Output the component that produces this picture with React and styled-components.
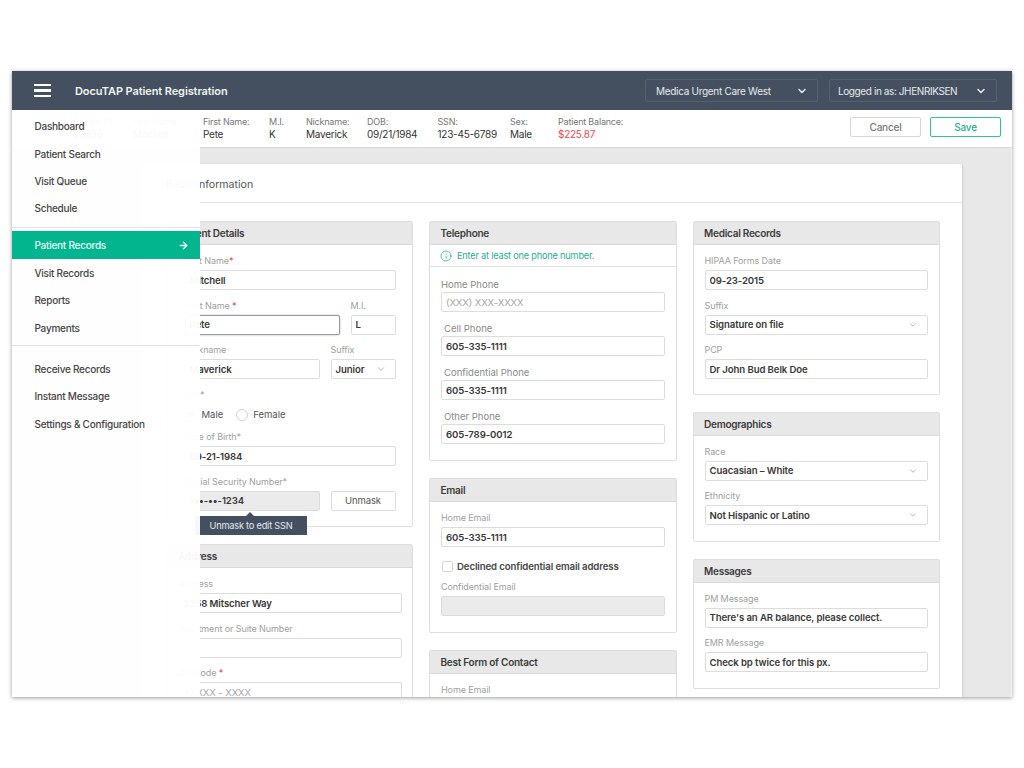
import React from "react";
import styled, { createGlobalStyle } from "styled-components";
import { ArrowRight, ChevronDown, Info } from "lucide-react";

const GlobalStyle = createGlobalStyle`
  html, body {
    margin: 0;
    padding: 0;
    background: #fff;
  }
  body {
    font-family: Inter, "Liberation Sans", sans-serif;
    color: #333;
  }
  * {
    box-sizing: border-box;
  }
`;

const Page = styled.div`
  padding: 71px 12px;
  height: 768px;
`;

const AppWindow = styled.div`
  position: relative;
  display: flex;
  flex-direction: column;
  width: 1000px;
  height: 626px;
  overflow: hidden;
  background: #e8e8e8;
  box-shadow: 0 1px 4px rgba(0, 0, 0, 0.4);
`;

const Header = styled.header`
  display: flex;
  align-items: center;
  flex: none;
  height: 39px;
  padding: 0 15px 0 22px;
  background: #44505f;
`;

const Burger = styled.div`
  display: flex;
  flex-direction: column;
  gap: 3px;
  width: 17px;
  margin-right: 24px;
  & span {
    height: 2.5px;
    background: #fff;
  }
`;

const AppTitle = styled.div`
  flex: 1;
  font-size: 11px;
  font-weight: 600;
  letter-spacing: -0.1px;
  color: #f0f2f4;
`;

const HeaderSelect = styled.div`
  display: flex;
  align-items: center;
  justify-content: space-between;
  width: ${(p) => p.$width}px;
  height: 23px;
  margin-left: 11px;
  padding: 0 9px 0 ${(p) => p.$pad}px;
  border: 1px solid #556170;
  border-radius: 2px;
  font-size: 10px;
  letter-spacing: ${(p) => p.$tight}px;
  white-space: nowrap;
  color: #e6e9ec;
`;

const InfoBar = styled.div`
  display: flex;
  flex: none;
  height: 38px;
  padding: 0 11px 0 61px;
  background: #fff;
  border-bottom: 1px solid #d9d9d9;
`;

const InfoItem = styled.div`
  width: ${(p) => p.$width}px;
  padding-top: 4.5px;
  font-size: 9px;
  letter-spacing: -0.2px;
  line-height: 13px;
  color: #777;
  & b {
    display: block;
    font-size: 10px;
    font-weight: 400;
    letter-spacing: -0.25px;
    color: ${(p) => (p.$alert ? "#f0494f" : "#333")};
  }
`;

const InfoActions = styled.div`
  display: flex;
  gap: 9px;
  margin-left: auto;
  padding-top: 7px;
`;

const BarButton = styled.button`
  width: 71px;
  height: 20px;
  padding: 0;
  background: #fff;
  border: 1px solid ${(p) => (p.$primary ? "#30bfa2" : "#d6d6d6")};
  border-radius: 2px;
  font: 500 10px Inter, "Liberation Sans", sans-serif;
  letter-spacing: -0.2px;
  color: ${(p) => (p.$primary ? "#1fae91" : "#777")};
`;

const Content = styled.main`
  flex: 1;
  min-height: 0;
  padding: 16px 49px 0 130px;
  border-right: 1px solid #f4f4f4;
`;

const Card = styled.section`
  height: 600px;
  background: #fff;
  border-radius: 2px;
  box-shadow: 0 1px 3px rgba(0, 0, 0, 0.22);
`;

const CardTitle = styled.div`
  height: 39px;
  padding: 0 24px;
  border-bottom: 1px solid #e6e6e6;
  font-size: 10.6px;
  line-height: 42px;
  color: #555;
`;

const Columns = styled.div`
  display: flex;
  gap: 16px;
  padding: 18px 22px 0 25px;
`;

const Column = styled.div`
  display: flex;
  flex-direction: column;
  flex: ${(p) => (p.$narrow ? "0 0 246px" : "0 0 247.5px")};
  gap: 17px;
`;

const Panel = styled.div`
  height: ${(p) => (p.$height ? `${p.$height}px` : "auto")};
  border: 1px solid #dedede;
  border-radius: 2px;
  background: #fff;
`;

const PanelHead = styled.div`
  height: 23px;
  padding: 0 10.5px;
  background: #e8e8e8;
  border-bottom: 1px solid #d9d9d9;
  font-size: 10px;
  font-weight: 600;
  letter-spacing: -0.25px;
  line-height: 23px;
  color: #3b3b3b;
`;

const PanelBody = styled.div`
  display: flex;
  flex-direction: column;
  gap: ${(p) => p.$gap ?? 9.5}px;
  padding: ${(p) => p.$top ?? 10}px ${(p) => p.$side}px 0;
`;

const Notice = styled.div`
  display: flex;
  align-items: center;
  gap: 5px;
  height: 22px;
  padding: 0 10px;
  border-bottom: 1px solid #e2e2e2;
  font-size: 9.2px;
  letter-spacing: -0.2px;
  color: #1fae91;
`;

const Field = styled.div`
  flex: ${(p) => (p.$grow ? 1 : "none")};
  width: ${(p) => (p.$width ? `${p.$width}px` : "auto")};
`;

const Label = styled.div`
  height: 12px;
  margin-bottom: ${(p) => (p.$strong ? 1 : 3)}px;
  padding-left: ${(p) => p.$indent ?? 0}px;
  font-size: ${(p) => (p.$strong ? 9.5 : 9)}px;
  letter-spacing: ${(p) => (p.$strong ? 0 : -0.1)}px;
  line-height: 12px;
  color: ${(p) => (p.$strong ? "#8a8a8a" : "#a0a0a0")};
  & i {
    font-style: normal;
    color: #e8333b;
  }
`;

const TextBox = styled.input`
  display: block;
  width: 100%;
  height: 20px;
  padding: 0 4px;
  background: ${(p) => (p.$shaded ? "#ebebeb" : "#fff")};
  border: 1px solid ${(p) => (p.$focused ? "#9a9a9a" : "#dcdcdc")};
  border-radius: 2px;
  box-shadow: ${(p) => (p.$focused ? "0 0 2px rgba(0, 0, 0, 0.35)" : "none")};
  outline: none;
  font: 600 9.6px Inter, "Liberation Sans", sans-serif;
  letter-spacing: -0.1px;
  color: #383838;
  &::placeholder {
    font-weight: 400;
    color: #a5a5a5;
  }
`;

const SelectBox = styled.div`
  display: flex;
  align-items: center;
  justify-content: space-between;
  height: 20px;
  padding: 0 9px 0 4px;
  border: 1px solid #dcdcdc;
  border-radius: 2px;
  font-size: 9.6px;
  font-weight: 600;
  letter-spacing: -0.1px;
  color: #383838;
  & svg {
    color: #888;
  }
`;

const Row = styled.div`
  display: flex;
  gap: ${(p) => p.$gap ?? 11}px;
  align-items: flex-end;
`;

const RadioRow = styled.div`
  display: flex;
  align-items: center;
  height: 12px;
  margin-top: 8px;
  margin-bottom: 1px;
  font-size: 9.5px;
  color: #555;
`;

const Radio = styled.span`
  display: flex;
  align-items: center;
  justify-content: center;
  width: 12px;
  height: 12px;
  margin-right: 5px;
  margin-left: ${(p) => p.$offset ?? 0}px;
  border: 1px solid #cfcfcf;
  border-radius: 50%;
  &::after {
    content: "";
    width: 5px;
    height: 5px;
    border-radius: 50%;
    background: ${(p) => (p.$on ? "#888" : "transparent")};
  }
`;

const GhostButton = styled.button`
  flex: none;
  width: 65px;
  height: 20px;
  padding: 0;
  background: #fff;
  border: 1px solid #dcdcdc;
  border-radius: 2px;
  font: 400 9.5px Inter, "Liberation Sans", sans-serif;
  letter-spacing: -0.1px;
  color: #555;
`;

const CheckRow = styled.div`
  display: flex;
  align-items: center;
  gap: 4px;
  margin-top: 4px;
  padding-left: 1px;
  font-size: 9.6px;
  font-weight: 600;
  letter-spacing: -0.1px;
  color: #444;
  & span {
    width: 11px;
    height: 11px;
    border: 1px solid #d6d6d6;
    border-radius: 2px;
  }
`;

const Tooltip = styled.div`
  position: absolute;
  left: 183px;
  top: 445px;
  width: 112px;
  height: 19px;
  background: #44505f;
  font-size: 9.2px;
  letter-spacing: -0.2px;
  line-height: 19px;
  text-align: center;
  color: #e6e9ec;
  &::before {
    content: "";
    position: absolute;
    left: 51px;
    top: -4px;
    border-left: 4px solid transparent;
    border-right: 4px solid transparent;
    border-bottom: 4px solid #44505f;
  }
`;

const Menu = styled.nav`
  position: absolute;
  left: 0;
  top: 39px;
  bottom: 0;
  width: 188px;
  padding-top: 2.5px;
  background: rgba(255, 255, 255, 0.96);
`;

const MenuGroup = styled.div`
  padding-bottom: ${(p) => p.$bottom ?? 0}px;
  margin-bottom: ${(p) => p.$after ?? 0}px;
  border-bottom: ${(p) => (p.$ruled ? "1px solid #e2e2e2" : "none")};
`;

const MenuItem = styled.div`
  display: flex;
  align-items: center;
  justify-content: space-between;
  height: ${(p) => (p.$active ? 28 : 27.4)}px;
  padding: 0 11px 0 22.5px;
  background: ${(p) => (p.$active ? "#02b58f" : "transparent")};
  font-size: 10px;
  font-weight: 500;
  letter-spacing: -0.25px;
  color: ${(p) => (p.$active ? "#e9fbf6" : "#444")};
`;

const Chevron = () => <ChevronDown size={10} strokeWidth={1.5} />;

function TextField({ label, value, placeholder, required, indent, strong, width, grow, shaded, focused }) {
  return (
    <Field $width={width} $grow={grow}>
      <Label $indent={indent} $strong={strong}>
        {label}
        {required && <i>{required}</i>}
      </Label>
      <TextBox readOnly value={value ?? ""} placeholder={placeholder} $shaded={shaded} $focused={focused} />
    </Field>
  );
}

function SelectField({ label, value, width }) {
  return (
    <Field $width={width}>
      <Label>{label}</Label>
      <SelectBox>
        {value}
        <Chevron />
      </SelectBox>
    </Field>
  );
}

const infoItems = [
  ["Patient ID", "99859", 60],
  ["Last Name:", "Mitchell", 70],
  ["First Name:", "Pete", 66],
  ["M.I.", "K", 37],
  ["Nickname:", "Maverick", 61],
  ["DOB:", "09/21/1984", 70.5],
  ["SSN:", "123-45-6789", 72.5],
  ["Sex:", "Male", 48],
  ["Patient Balance:", "$225.87", 90, true],
];

const menuTop = ["Dashboard", "Patient Search", "Visit Queue", "Schedule"];
const menuMiddle = ["Visit Records", "Reports", "Payments"];
const menuBottom = ["Receive Records", "Instant Message", "Settings & Configuration"];

export default function App() {
  return (
    <Page>
      <GlobalStyle />
      <AppWindow>
        <Header>
          <Burger>
            <span />
            <span />
            <span />
          </Burger>
          <AppTitle>DocuTAP Patient Registration</AppTitle>
          <HeaderSelect $width={173} $pad={10} $tight={-0.3}>
            Medica Urgent Care West
            <ChevronDown size={12} strokeWidth={3} />
          </HeaderSelect>
          <HeaderSelect $width={168} $pad={8} $tight={-0.4}>
            Logged in as: JHENRIKSEN
            <ChevronDown size={12} strokeWidth={3} />
          </HeaderSelect>
        </Header>

        <InfoBar>
          {infoItems.map(([label, value, width, alert]) => (
            <InfoItem key={label} $width={width} $alert={alert}>
              {label}
              <b>{value}</b>
            </InfoItem>
          ))}
          <InfoActions>
            <BarButton>Cancel</BarButton>
            <BarButton $primary>Save</BarButton>
          </InfoActions>
        </InfoBar>

        <Content>
          <Card>
            <CardTitle>Basic Information</CardTitle>
            <Columns>
              <Column $narrow>
                <Panel $height={306}>
                  <PanelHead>Patient Details</PanelHead>
                  <PanelBody $side={16.5}>
                    <TextField label="Last Name" required="*" value="Mitchell" />
                    <Row>
                      <TextField label="First Name " required="*" value="Pete" grow focused />
                      <TextField label="M.I." value="L" width={45} />
                    </Row>
                    <Row>
                      <TextField label="Nickname" value="Maverick" grow />
                      <SelectField label="Suffix" value="Junior" width={65} />
                    </Row>
                    <Field>
                      <Label>Sex*</Label>
                      <RadioRow>
                        <Radio $on />
                        Male
                        <Radio $offset={13} />
                        Female
                      </RadioRow>
                    </Field>
                    <TextField label="Date of Birth*" value="09-21-1984" />
                    <Row>
                      <TextField label="Social Security Number*" value="•••-••-1234" grow shaded />
                      <GhostButton>Unmask</GhostButton>
                    </Row>
                  </PanelBody>
                </Panel>
                <Panel>
                  <PanelHead>Address</PanelHead>
                  <PanelBody $side={10.5}>
                    <TextField label="Address" value="2258 Mitscher Way" />
                    <TextField label="Apartment or Suite Number" />
                    <TextField label="Zip Code " required="*" placeholder="XXXXX - XXXX" />
                  </PanelBody>
                </Panel>
              </Column>

              <Column>
                <Panel $height={240}>
                  <PanelHead>Telephone</PanelHead>
                  <Notice>
                    <Info size={12} strokeWidth={1.5} />
                    Enter at least one phone number.
                  </Notice>
                  <PanelBody $side={11} $gap={11} $top={12}>
                    <TextField label="Home Phone" placeholder="(XXX) XXX-XXXX" strong />
                    <TextField label="Cell Phone" value="605-335-1111" indent={3} strong />
                    <TextField label="Confidential Phone" value="605-335-1111" indent={3} strong />
                    <TextField label="Other Phone" value="605-789-0012" indent={3} strong />
                  </PanelBody>
                </Panel>
                <Panel $height={155}>
                  <PanelHead>Email</PanelHead>
                  <PanelBody $side={11}>
                    <TextField label="Home Email" value="605-335-1111" />
                    <CheckRow>
                      <span />
                      Declined confidential email address
                    </CheckRow>
                    <TextField label="Confidential Email" shaded />
                  </PanelBody>
                </Panel>
                <Panel>
                  <PanelHead>Best Form of Contact</PanelHead>
                  <PanelBody $side={11}>
                    <TextField label="Home Email" />
                  </PanelBody>
                </Panel>
              </Column>

              <Column>
                <Panel $height={173.5}>
                  <PanelHead>Medical Records</PanelHead>
                  <PanelBody $side={11}>
                    <TextField label="HIPAA Forms Date" value="09-23-2015" />
                    <SelectField label="Suffix" value="Signature on file" />
                    <TextField label="PCP" value="Dr John Bud Belk Doe" />
                  </PanelBody>
                </Panel>
                <Panel $height={130}>
                  <PanelHead>Demographics</PanelHead>
                  <PanelBody $side={11}>
                    <SelectField label="Race" value="Cuacasian – White" />
                    <SelectField label="Ethnicity" value="Not Hispanic or Latino" />
                  </PanelBody>
                </Panel>
                <Panel $height={130}>
                  <PanelHead>Messages</PanelHead>
                  <PanelBody $side={11}>
                    <TextField label="PM Message" value="There's an AR balance, please collect." />
                    <TextField label="EMR Message" value="Check bp twice for this px." />
                  </PanelBody>
                </Panel>
              </Column>
            </Columns>
          </Card>
        </Content>

        <Tooltip>Unmask to edit SSN</Tooltip>

        <Menu>
          <MenuGroup $ruled $bottom={5} $after={3}>
            {menuTop.map((item) => (
              <MenuItem key={item}>{item}</MenuItem>
            ))}
          </MenuGroup>
          <MenuItem $active>
            Patient Records
            <ArrowRight size={11} strokeWidth={3} />
          </MenuItem>
          <MenuGroup $ruled $bottom={4} $after={9}>
            {menuMiddle.map((item) => (
              <MenuItem key={item}>{item}</MenuItem>
            ))}
          </MenuGroup>
          {menuBottom.map((item) => (
            <MenuItem key={item}>{item}</MenuItem>
          ))}
        </Menu>
      </AppWindow>
    </Page>
  );
}
